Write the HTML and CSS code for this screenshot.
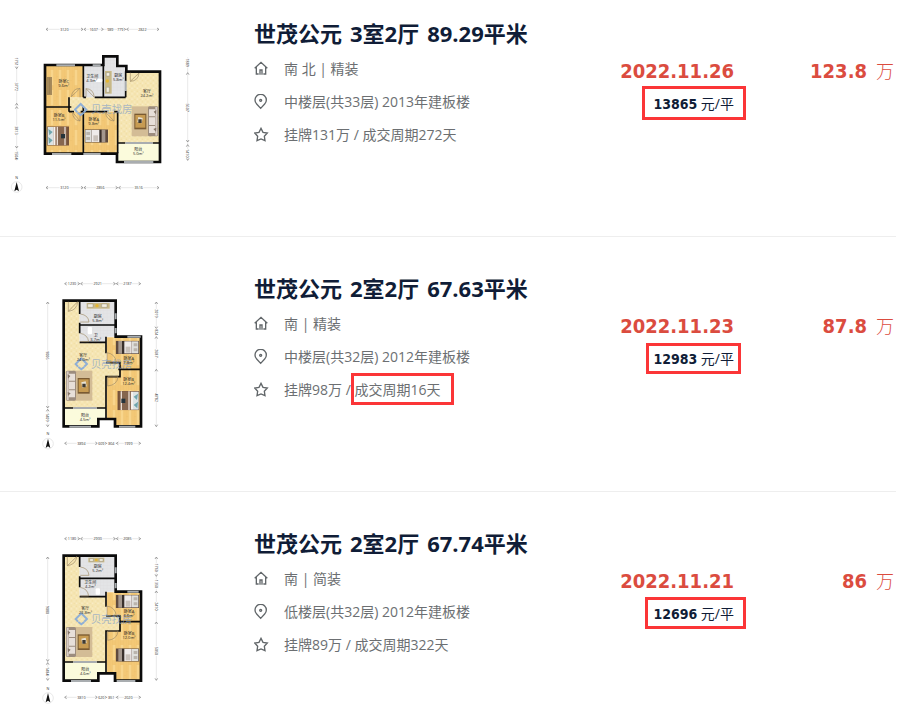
FILE: index.html
```
<!DOCTYPE html>
<html lang="zh-CN">
<head>
  <meta charset="UTF-8" />
  <meta name="viewport" content="width=device-width, initial-scale=1.0"/>
  <title>世茂公元 成交记录</title>
  <link rel="stylesheet" href="styles.css">
</head>
<body>
  <!-- Shared icons and furniture -->
  <svg class="defs" width="0" height="0" aria-hidden="true">
    <defs>
      <symbol id="icon-home" viewBox="0 0 48 48">
        <path d="M2 22 L21 4 L40 22 M7 19 V39 H14 M35 19 V39 H28 M18 41 V27 H24 V41" />
      </symbol>
      <symbol id="icon-pin" viewBox="0 0 48 48">
        <path d="M20 43 L8 30 A17 17 0 1 1 32 30 Z" />
        <circle cx="20" cy="19" r="3" />
      </symbol>
      <symbol id="icon-star" viewBox="0 0 48 48">
        <path d="M21 4 L27 16 L40 18 L31 28 L33 41 L21 36 L9 41 L11 28 L2 18 L15 16 Z" />
      </symbol>
      <pattern id="wood" width="24" height="60" patternUnits="userSpaceOnUse">
        <rect width="24" height="60" fill="#f3c876" />
        <path d="M0 0V60M8 0V60M16 0V60M0 20H8M8 46H16M16 32H24" stroke="#e9bb66" stroke-width="1" />
        <rect x="8" width="8" height="46" fill="#f8d58c" />
      </pattern>
      <pattern id="stone" width="16" height="16" patternUnits="userSpaceOnUse">
        <rect width="16" height="16" fill="#f5e5b2" />
        <path d="M2 3h4v3H2zM10 9h4v4h-4z" fill="#faeecb" />
        <path d="M10 2h3v3h-3zM3 11h4v2H3z" fill="#efd99d" />
      </pattern>
      <pattern id="tile" width="10" height="10" patternUnits="userSpaceOnUse">
        <rect width="10" height="10" fill="#e3e4e6" />
        <path d="M0 0H10M0 0V10" stroke="#d6d8da" stroke-width="1" />
      </pattern>
      <symbol id="bed" viewBox="0 0 66 58">
        <rect width="66" height="58" fill="#76533b" />
        <rect x="2" y="2" width="17" height="54" fill="#dce3e4" />
        <path d="M4 8L17 17L7 27ZM4 32L17 42L6 52Z" fill="#6fa5ad" />
        <rect x="19" y="2" width="7" height="54" fill="#f6f1ed" />
        <rect x="26" y="1" width="33" height="56" fill="#86664f" />
        <path d="M31 1V57M54 1V57" stroke="#e9dcd3" stroke-width="4" />
        <rect x="42" y="23" width="12" height="13" fill="#25333b" />
      </symbol>
      <symbol id="bed-small" viewBox="0 0 70 40">
        <rect width="70" height="40" fill="#5e4a3e" />
        <rect x="2" y="2" width="19" height="36" fill="#dfdfdc" />
        <path d="M5 8H16V17H5ZM5 23H16V32H5Z" fill="#bab4ac" />
        <rect x="22" y="2" width="24" height="36" fill="#efebea" />
        <rect x="44" y="1" width="7" height="38" fill="#39302c" />
        <rect x="51" y="1" width="11" height="38" fill="#a4978d" />
        <rect x="26" y="18" width="14" height="18" fill="#c9c1ba" />
      </symbol>
      <symbol id="sofa" viewBox="0 0 82 94">
        <rect x="22" y="2" width="58" height="90" fill="#d3bc96" />
        <rect x="36" y="24" width="36" height="47" fill="#7a5a32" />
        <rect x="39" y="28" width="30" height="38" fill="#c79b52" />
        <path d="M47 37L60 34L63 49L50 53Z" fill="#e9e3d4" />
        <path d="M50 41H60V52H50Z" fill="#3f3a32" />
        <rect x="0" y="2" width="31" height="90" rx="5" fill="#9c8c7e" />
        <rect x="3" y="4" width="6" height="86" fill="#d8cec6" />
        <path d="M10 11H28V32H10ZM10 35H28V58H10ZM10 61H28V82H10Z" fill="#e7dfd9" />
        <path d="M6 13L14 18L7 26ZM6 66L15 70L7 78Z" fill="#847568" />
      </symbol>
      <symbol id="north" viewBox="0 0 40 54">
        <text class="dim" x="20" y="10">N</text>
        <circle cx="20" cy="35" r="16" fill="none" stroke="#bbb" />
        <path d="M20 20L27 48L20 43L13 48Z" fill="#111" />
      </symbol>
      <symbol id="brand" viewBox="0 0 44 44">
        <path d="M12 31L5 23L22 6L39 23L31 31M13 32L22 39L31 32" fill="none" stroke="#8fafd6" stroke-width="6" />
      </symbol>
    </defs>
  </svg>

  <ul class="deal-list">
    <li class="deal">
      <svg class="plan" viewBox="0 15 630 570" role="img" aria-label="3室2厅户型图">
        <g class="ruler">
          <path d="M138 58H477M50 142V452M563 142V452M138 533H477" />
          <path class="arrows" d="M144 54L138 58L144 62M243 54L249 58L243 62M258 54L252 58L258 62M304 54L310 58L304 62M371 54L377 58L371 62M386 54L380 58L386 62M471 54L477 58L471 62M144 529L138 533L144 537M243 529L249 533L243 537M258 529L252 533L258 537M347 529L353 533L347 537M362 529L356 533L362 537M471 529L477 533L471 537M46 170L50 176L54 170M46 286L50 280L54 286M46 296L50 290L54 296M46 408L50 414L54 408M559 194L563 188L567 194M559 390L563 396L567 390M559 410L563 404L567 410M559 445L563 451L567 445" />
          <text class="dim" x="193" y="62">3120</text>
          <text class="dim" x="281" y="62">1607</text>
          <text class="dim" x="331" y="62">989</text>
          <text class="dim" x="361" y="62">779</text>
          <text class="dim" x="427" y="62">2822</text>
          <text class="dim" x="193" y="537">3120</text>
          <text class="dim" x="301" y="537">2856</text>
          <text class="dim" x="416" y="537">3516</text>
          <text class="dim" transform="translate(46 155) rotate(90)">1751</text>
          <text class="dim" transform="translate(46 230) rotate(90)">3772</text>
          <text class="dim" transform="translate(46 361) rotate(90)">3813</text>
          <text class="dim" transform="translate(46 436) rotate(90)">1504</text>
          <text class="dim" transform="translate(559 158) rotate(90)">1889</text>
          <text class="dim" transform="translate(559 293) rotate(90)">5607</text>
          <text class="dim" transform="translate(559 430) rotate(90)">1410</text>
        </g>
        <path d="M205 262H377V184H480V400H353V305H205Z" fill="url(#stone)" />
        <path d="M135 165H250V262H207V290H135ZM135 290H207V305H353V430H135Z" fill="url(#wood)" />
        <path d="M252 165H310V142H352V172H377V262H252Z" fill="url(#tile)" />
        <rect x="355" y="400" width="125" height="55" fill="#fbfbdc" />
        <path class="wall" d="M135 165H310V139H352V168H379V185H480V456H351V431H135Z" />
        <path class="inner" d="M250 165V262M310 165V262M250 262H258M284 262H377M377 184V213M377 242V262M207 262V305M137 291H214M207 305H222M242 305H322M342 305H353M250 291V430M353 305V430M353 399H376M458 399H480" />
        <path class="window" d="M169 166H225M278 166H302M156 432H214M250 432H302M372 456H460M377 212V243M376 399H458" />
        <path class="door" d="M214 260L240 235V262M214 260Q217 236 240 235M217 306L240 333V306M217 306Q219 331 240 333M283 262L258 236V262M283 262Q280 236 258 236M316 306L342 333V306M316 306Q319 331 342 333M391 188V214L417 189M391 214Q415 213 417 189" />
        <rect x="141" y="201" width="15" height="54" fill="#a68a5b" />
        <path d="M149 203V252" stroke="#80673d" />
        <rect x="315" y="183" width="20" height="68" fill="#c8b987" />
        <path d="M319 188H329V198H319ZM319 232H328V247H319Z" fill="#f3efdf" stroke="#777" />
        <circle cx="322" cy="213" r="5" fill="#e5b632" />
        <rect x="285" y="206" width="22" height="10" rx="3" fill="#fff" />
        <use href="#bed" x="141" y="349" width="66" height="58" />
        <use href="#bed-small" x="254" y="358" width="70" height="40" />
        <use href="#sofa" transform="translate(475 287) scale(-1 1)" width="82" height="94" />
        <use href="#brand" x="220" y="276" width="44" height="44" />
        <text class="watermark" x="273" y="309">贝壳找房</text>
        <text class="room" x="191" y="219">卧室C</text><text class="room" x="191" y="231">9.6m²</text>
        <text class="room" x="277" y="204">卫生间</text><text class="room" x="275" y="216">4.3m²</text>
        <text class="room" x="355" y="201">厨房</text><text class="room" x="355" y="213">5.8m²</text>
        <text class="room" x="441" y="249">客厅</text><text class="room" x="441" y="261">24.2m²</text>
        <text class="room" x="177" y="321">卧室B</text><text class="room" x="177" y="333">11.5m²</text>
        <text class="room" x="281" y="333">卧室A</text><text class="room" x="281" y="345">9.8m²</text>
        <text class="room" x="415" y="424">阳台</text><text class="room" x="415" y="436">5.0m²</text>
        <use href="#north" x="30" y="496" width="40" height="54" />
      </svg>
      <div class="info">
        <h2><span>世茂公元</span> <span>3室2厅</span> <span>89.29平米</span></h2>
        <p><svg class="icon"><use href="#icon-home" /></svg>南 北 | 精装</p>
        <p><svg class="icon"><use href="#icon-pin" /></svg>中楼层(共33层) 2013年建板楼</p>
        <p><svg class="icon"><use href="#icon-star" /></svg>挂牌131万 / 成交周期272天</p>
      </div>
      <div class="date">
        <strong>2022.11.26</strong>
        <span class="unit mark mark-large"><b>13865</b> 元/平</span>
      </div>
      <div class="total"><strong>123.8</strong><span>万</span></div>
    </li>

    <li class="deal">
      <svg class="plan" viewBox="-90 0 630 570" role="img" aria-label="2室2厅户型图">
        <g class="ruler">
          <path d="M104 41H332M53 96V470M379 96V470M104 520H332" />
          <path class="arrows" d="M110 37L104 41L110 45M143 37L149 41L143 45M158 37L152 41L158 45M250 37L256 41L250 45M265 37L259 41L265 45M326 37L332 41L326 45M110 516L104 520L110 524M196 516L202 520L196 524M224 516L230 520L224 524M265 516L259 520L265 524M326 516L332 520L326 524M49 102L53 96L57 102M49 408L53 414L57 408M49 424L53 418L57 424M49 464L53 470L57 464M375 102L379 96L383 102M375 170L379 176L383 170M375 206L379 200L383 206M375 304L379 298L383 304M375 464L379 470L383 464" />
          <text class="dim" x="126" y="45">1230</text>
          <text class="dim" x="203" y="45">2921</text>
          <text class="dim" x="292" y="45">2187</text>
          <text class="dim" x="154" y="524">3894</text>
          <text class="dim" x="214" y="524">609</text>
          <text class="dim" x="244" y="524">804</text>
          <text class="dim" x="295" y="524">1999</text>
          <text class="dim" transform="translate(49 256) rotate(90)">9006</text>
          <text class="dim" transform="translate(49 442) rotate(90)">1409</text>
          <text class="dim" transform="translate(375 130) rotate(90)">2019</text>
          <text class="dim" transform="translate(375 187) rotate(90)">824</text>
          <text class="dim" transform="translate(375 250) rotate(90)">2687</text>
          <text class="dim" transform="translate(375 383) rotate(90)">4782</text>
        </g>
        <path d="M101 92H149V217H228V278H270V320H228V414H101Z" fill="url(#stone)" />
        <path d="M149 92H257V200H228V217H149Z" fill="url(#tile)" />
        <path d="M230 202H333V468H255V447H230V320H270V278H230Z" fill="url(#wood)" />
        <path d="M104 416H228V443H203V469H104Z" fill="#fbfbdc" />
        <path class="wall" d="M101 92H257V200H333V469H255V447H205V469H101Z" />
        <path class="inner" d="M149 92V132M149 158V190M149 165H257M149 217H230M228 200V250M228 278H270V320H228V445M265 298H333M104 414H130M200 414H230" />
        <path class="window" d="M118 470H183M267 470H316M292 200H332M257 130V148M257 174V190M130 414H200" />
        <path class="door" d="M115 95V124L143 95M115 124Q141 121 143 95M151 132Q175 135 177 156H151M151 190Q173 194 176 215H151M230 248Q256 251 259 278H231V248M233 320V348Q262 345 264 320Z" />
        <rect x="170" y="99" width="69" height="17" fill="#c8b987" />
        <path d="M173 102H189V112H173ZM215 102H231V112H215Z" fill="#f3efdf" stroke="#777" />
        <circle cx="201" cy="107" r="5" fill="#e5b632" />
        <rect x="173" y="171" width="13" height="22" rx="3" fill="#fff" />
        <use href="#bed-small" transform="translate(327 212) scale(-1 1)" width="70" height="40" />
        <use href="#bed" transform="translate(328 363) scale(-1 1)" width="66" height="58" />
        <use href="#sofa" x="107" y="300" width="82" height="94" />
        <use href="#brand" x="132" y="259" width="44" height="44" />
        <text class="watermark" x="183" y="293">贝壳找房</text>
        <text class="room" x="203" y="145">厨房</text><text class="room" x="203" y="157">5.8m²</text>
        <text class="room" x="197" y="200">卫</text><text class="room" x="197" y="212">3.7m²</text>
        <text class="room" x="160" y="260">客厅</text><text class="room" x="160" y="272">24.0m²</text>
        <text class="room" x="296" y="271">卧室A</text><text class="room" x="296" y="283">7.8m²</text>
        <text class="room" x="296" y="334">卧室B</text><text class="room" x="296" y="346">12.4m²</text>
        <text class="room" x="165" y="440">阳台</text><text class="room" x="165" y="452">4.5m²</text>
        <use href="#north" x="34" y="486" width="40" height="54" />
      </svg>
      <div class="info">
        <h2><span>世茂公元</span> <span>2室2厅</span> <span>67.63平米</span></h2>
        <p><svg class="icon"><use href="#icon-home" /></svg>南 | 精装</p>
        <p><svg class="icon"><use href="#icon-pin" /></svg>中楼层(共32层) 2012年建板楼</p>
        <p><svg class="icon"><use href="#icon-star" /></svg><span>挂牌98万 / <span class="mark mark-cycle">成交周期16天</span></span></p>
      </div>
      <div class="date">
        <strong>2022.11.23</strong>
        <span class="unit mark mark-small"><b>12983</b> 元/平</span>
      </div>
      <div class="total"><strong>87.8</strong><span>万</span></div>
    </li>

    <li class="deal">
      <svg class="plan" viewBox="-90 0 630 570" role="img" aria-label="2室2厅户型图">
        <g class="ruler">
          <path d="M104 41H332M53 96V466M379 96V466M104 517H332" />
          <path class="arrows" d="M110 37L104 41L110 45M143 37L149 41L143 45M158 37L152 41L158 45M250 37L256 41L250 45M265 37L259 41L265 45M326 37L332 41L326 45M110 513L104 517L110 521M196 513L202 517L196 521M224 513L230 517L224 521M265 513L259 517L265 521M326 513L332 517L326 521M49 102L53 96L57 102M49 403L53 409L57 403M49 419L53 413L57 419M49 460L53 466L57 460M375 102L379 96L383 102M375 148L379 154L383 148M375 204L379 198L383 204M375 297L379 291L383 297M375 460L379 466L383 460" />
          <text class="dim" x="126" y="45">1180</text>
          <text class="dim" x="203" y="45">2900</text>
          <text class="dim" x="292" y="45">2085</text>
          <text class="dim" x="154" y="521">3810</text>
          <text class="dim" x="214" y="521">620</text>
          <text class="dim" x="244" y="521">851</text>
          <text class="dim" x="295" y="521">2020</text>
          <text class="dim" transform="translate(49 255) rotate(90)">9080</text>
          <text class="dim" transform="translate(49 439) rotate(90)">1484</text>
          <text class="dim" transform="translate(375 128) rotate(90)">1760</text>
          <text class="dim" transform="translate(375 177) rotate(90)">1350</text>
          <text class="dim" transform="translate(375 244) rotate(90)">2410</text>
          <text class="dim" transform="translate(375 378) rotate(90)">5050</text>
        </g>
        <path d="M101 92H149V215H228V273H270V318H228V411H101Z" fill="url(#stone)" />
        <path d="M149 92H257V200H228V215H149Z" fill="url(#tile)" />
        <path d="M230 202H333V466H255V445H230V318H270V273H230Z" fill="url(#wood)" />
        <path d="M104 412H228V443H203V466H104Z" fill="#fbfbdc" />
        <path class="wall" d="M101 92H257V200H333V467H255V445H205V467H101Z" />
        <path class="inner" d="M149 92V126M149 154V187M149 160H257M149 215H230M228 200V245M228 273H270V318H228V443M270 290H333M104 411H130M200 411H230" />
        <path class="window" d="M123 468H183M260 468H316M292 200H326M257 127V145M257 174V190M130 411H200" />
        <path class="door" d="M112 95V122L140 95M112 122Q138 119 140 95M151 126Q175 129 177 151H151M151 187Q173 191 176 213H151M230 243Q256 246 259 273H231V243M233 318V346Q262 343 264 318Z" />
        <rect x="175" y="98" width="48" height="14" fill="#c8b987" />
        <path d="M179 101H190V109H179ZM208 101H219V109H208Z" fill="#f3efdf" stroke="#777" />
        <circle cx="199" cy="105" r="4" fill="#e5b632" />
        <rect x="197" y="190" width="13" height="19" rx="3" fill="#fff" />
        <use href="#bed-small" transform="translate(327 209) scale(-1 1)" width="70" height="40" />
        <use href="#bed-small" transform="translate(327 370) scale(-1 1)" width="70" height="40" />
        <use href="#sofa" x="107" y="304" width="82" height="94" />
        <use href="#brand" x="132" y="259" width="44" height="44" />
        <text class="watermark" x="183" y="293">贝壳找房</text>
        <text class="room" x="203" y="130">厨房</text><text class="room" x="203" y="142">5.2m²</text>
        <text class="room" x="181" y="178">卫生间</text><text class="room" x="181" y="190">4.2m²</text>
        <text class="room" x="166" y="256">客厅</text><text class="room" x="166" y="268">23.8m²</text>
        <text class="room" x="297" y="264">卧室A</text><text class="room" x="297" y="276">6.6m²</text>
        <text class="room" x="297" y="331">卧室B</text><text class="room" x="297" y="343">12.0m²</text>
        <text class="room" x="166" y="437">阳台</text><text class="room" x="166" y="449">4.6m²</text>
        <use href="#north" x="34" y="484" width="40" height="54" />
      </svg>
      <div class="info">
        <h2><span>世茂公元</span> <span>2室2厅</span> <span>67.74平米</span></h2>
        <p><svg class="icon"><use href="#icon-home" /></svg>南 | 简装</p>
        <p><svg class="icon"><use href="#icon-pin" /></svg>低楼层(共32层) 2012年建板楼</p>
        <p><svg class="icon"><use href="#icon-star" /></svg>挂牌89万 / 成交周期322天</p>
      </div>
      <div class="date">
        <strong>2022.11.21</strong>
        <span class="unit mark mark-medium"><b>12696</b> 元/平</span>
      </div>
      <div class="total"><strong>86</strong><span>万</span></div>
    </li>
  </ul>
</body>
</html>
```
FILE: styles.css
```
body {
  margin: 0;
  font-family: "Open Sans", "Noto Sans CJK SC", sans-serif;
  font-size: 14px;
  background: #fff;
  color: #6c6f72;
}
.defs {
  position: absolute;
}
.deal-list {
  list-style: none;
  margin: 0 20px 0 0;
  padding: 0;
}
.deal {
  display: grid;
  grid-template-columns: 210px 1fr 114px 160px;
  padding: 33px 2px 31px 0;
  border-bottom: 1px solid #eee;
}
.deal:first-child {
  padding-top: 15px;
}
.deal:last-child {
  padding-bottom: 0;
  border-bottom: none;
}

/* Listing details */
.info {
  padding: 3px 0 0 44px;
}
.info h2 {
  display: flex;
  gap: 8px;
  margin: 0 0 4px;
  color: #101d37;
  font-size: 22px;
  line-height: 30px;
  white-space: nowrap;
}
.info p {
  display: flex;
  align-items: center;
  gap: 14px;
  margin: 0;
  line-height: 33px;
  white-space: nowrap;
}
.icon {
  width: 16px;
  height: 16px;
  overflow: visible;
  fill: none;
  stroke: #616669;
  stroke-width: 4;
}

/* Prices */
.date {
  padding-top: 42px;
  text-align: right;
  white-space: nowrap;
}
.date strong,
.total strong {
  font-family: "DejaVu Sans Condensed", "DejaVu Sans", sans-serif;
  font-size: 20px;
  color: #db4c3f;
}
.date strong {
  display: block;
  line-height: 28px;
}
.unit {
  display: inline-block;
  margin-top: 9px;
  color: #101d37;
  line-height: 20px;
}
.unit b {
  font-family: "DejaVu Sans Condensed", "DejaVu Sans", sans-serif;
}
.total {
  display: flex;
  justify-content: flex-end;
  align-items: baseline;
  gap: 9px;
  padding-top: 42px;
  line-height: 28px;
  color: #db4c3f;
}
.total span {
  font-size: 18px;
  font-weight: 300;
}

/* Red highlight boxes */
.mark {
  position: relative;
}
.mark::after {
  content: "";
  position: absolute;
  border: 3px solid #fb3537;
}
.mark-large::after {
  inset: -8px -12px -6px -11px;
}
.mark-small::after {
  inset: -6px -7px -5px -7px;
}
.mark-medium::after {
  inset: -7px -12px -5px -8px;
}
.mark-cycle::after {
  inset: -7px -14px -6px -3px;
}

/* Floor plans */
.plan {
  width: 210px;
  height: 190px;
}
.wall {
  fill: none;
  stroke: #0b0b0b;
  stroke-width: 8;
}
.inner {
  fill: none;
  stroke: #0b0b0b;
  stroke-width: 5;
}
.window {
  fill: none;
  stroke: #a9adb0;
  stroke-width: 6;
}
.door {
  fill: none;
  stroke: #a08d68;
  stroke-width: 2;
}
.ruler path {
  fill: none;
  stroke: #bbb;
  stroke-width: 1;
}
.ruler .arrows {
  stroke: #777;
  stroke-width: 2;
}
.dim {
  font-size: 11px;
  text-anchor: middle;
  fill: #333;
  stroke: #fff;
  stroke-width: 5;
  paint-order: stroke;
}
.room {
  font-size: 12px;
  text-anchor: middle;
  fill: #222;
}
.watermark {
  font-size: 31px;
  fill: #7f9fcb;
  opacity: 0.65;
}
```
